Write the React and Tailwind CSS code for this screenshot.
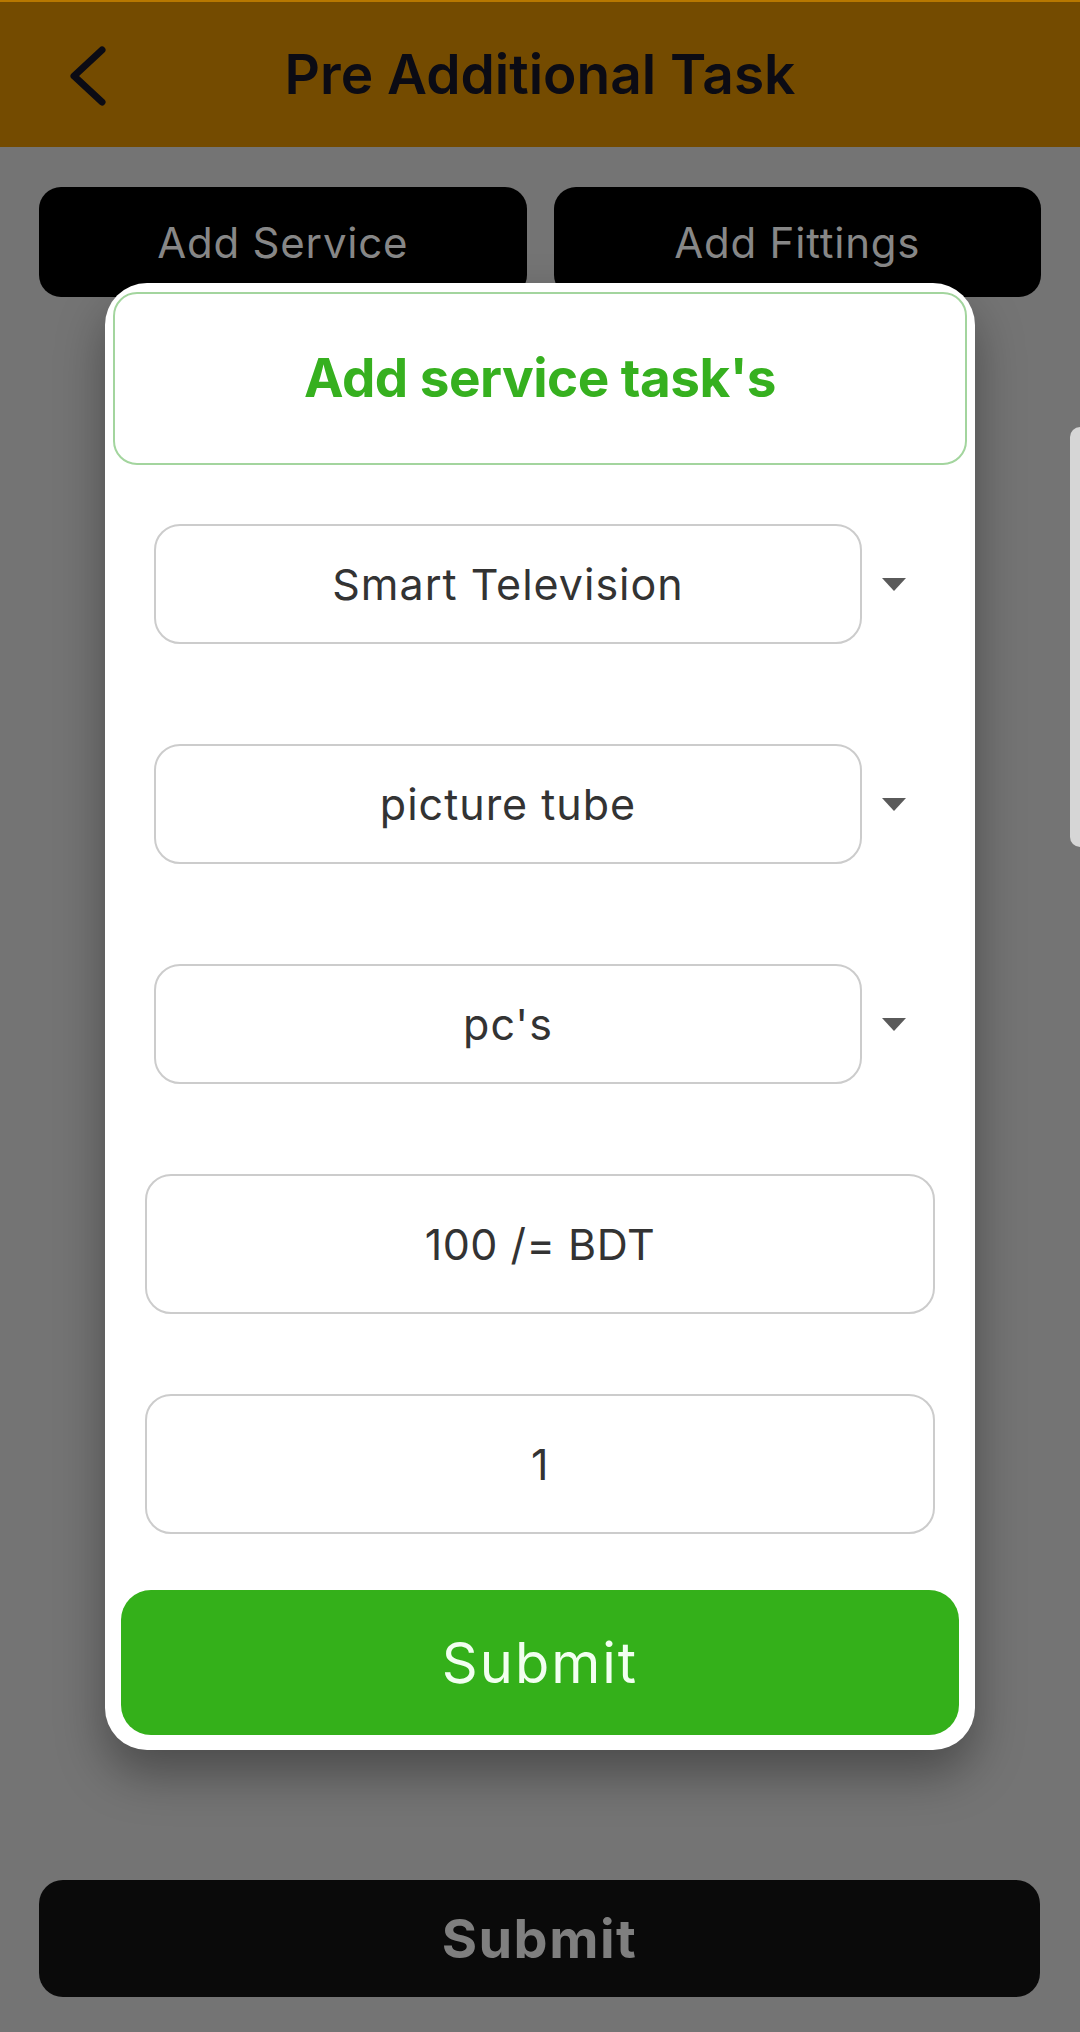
const font = { fontFamily: 'Inter, "Noto Sans", sans-serif' };

const Dropdown = ({ value }) => {
    return (
        <div className="flex items-center">
            <div className="ml-[49px] w-[708px] h-[120px] rounded-[26px] border-2 border-[#cccccc] flex items-center justify-center">
                <span className="text-[43px] tracking-[1px] text-[#333333]">{value}</span>
            </div>
            <div className="ml-[20px] w-0 h-0 border-l-[12px] border-r-[12px] border-t-[13px] border-l-transparent border-r-transparent border-t-[#5a5a5a]" />
        </div>
    );
};

const Field = ({ value }) => {
    return (
        <div className="mx-[40px] h-[140px] rounded-[26px] border-2 border-[#cccccc] flex items-center justify-center">
            <span className="text-[43px] tracking-[0.5px] text-[#333333]">{value}</span>
        </div>
    );
};

export default function App() {
    return (
        <div className="relative w-[1080px] h-[2032px] bg-[#747474] overflow-hidden" style={font}>
            {/* header */}
            <div className="h-[147px] bg-[#744b00] border-t-2 border-[#b87800] relative flex items-center justify-center">
                <button className="absolute left-[66px] top-[44px]">
                    <svg width="42" height="60" viewBox="0 0 42 60" fill="none">
                        <polyline points="36,4 8,30 36,56" stroke="#0b0b14" strokeWidth="7" strokeLinecap="round" strokeLinejoin="round" />
                    </svg>
                </button>
                <h1 className="text-[55px] font-semibold text-[#0b0b14] tracking-[0px]">Pre Additional Task</h1>
            </div>

            {/* tabs */}
            <div className="mt-[40px] px-[39px] flex gap-[27px]">
                <div className="flex-1 h-[110px] bg-black rounded-[22px] flex items-center justify-center">
                    <span className="text-[42px] tracking-[0.8px] text-[#878787]">Add Service</span>
                </div>
                <div className="flex-1 h-[110px] bg-black rounded-[22px] flex items-center justify-center">
                    <span className="text-[42px] tracking-[0.8px] text-[#878787]">Add Fittings</span>
                </div>
            </div>

            {/* bottom submit */}
            <div className="absolute left-[39px] right-[40px] top-[1880px] h-[117px] bg-[#0a0a0a] rounded-[24px] flex items-center justify-center">
                <span className="text-[54px] font-bold tracking-[1.5px] text-[#7f7f7f]">Submit</span>
            </div>

            {/* side handle */}
            <div className="absolute right-0 top-[427px] w-[10px] h-[420px] bg-[#d6d6d6] rounded-l-[10px]" />

            {/* dialog */}
            <div className="absolute left-[105px] top-[283px] w-[870px] h-[1467px] bg-white rounded-[42px] shadow-[0_24px_48px_rgba(0,0,0,0.35)] flex flex-col">
                <div className="mt-[9px] mx-[8px] h-[173px] rounded-[24px] border-2 border-[#a3d59e] flex items-center justify-center">
                    <span className="text-[53px] font-bold tracking-[-0.5px] text-[#36b01f]">Add service task's</span>
                </div>
                <div className="mt-[59px] flex flex-col gap-[100px]">
                    <Dropdown value="Smart Television" />
                    <Dropdown value="picture tube" />
                    <Dropdown value="pc's" />
                </div>
                <div className="mt-[90px] flex flex-col gap-[80px]">
                    <Field value="100 /= BDT" />
                    <Field value="1" />
                </div>
                <button className="mt-[56px] mx-[16px] h-[145px] rounded-[30px] bg-[#34b01a] flex items-center justify-center">
                    <span className="text-[56px] tracking-[2px] text-[#f2fff0]">Submit</span>
                </button>
            </div>
        </div>
    );
}
